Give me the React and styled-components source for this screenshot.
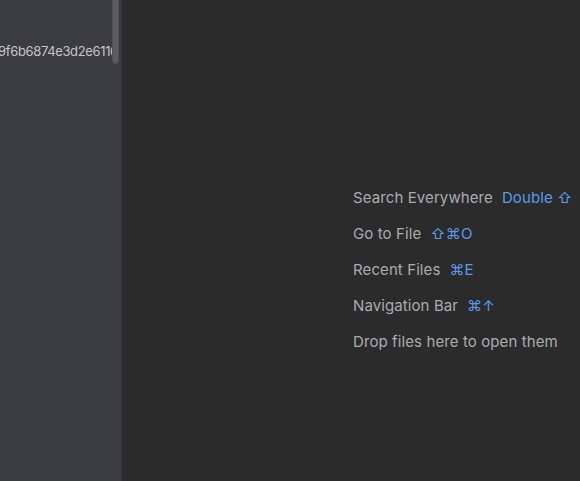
import React from 'react';
import styled, { createGlobalStyle } from 'styled-components';

const Global = createGlobalStyle`
  html, body { margin: 0; padding: 0; background: #2b2b2b; }
  body { font-family: Inter, "Noto Sans", sans-serif; -webkit-font-smoothing: antialiased; }
`;

const Frame = styled.div`
  display: flex;
  height: 481px;
  overflow: hidden;
`;

const Sidebar = styled.aside`
  position: relative;
  width: 121px;
  flex-shrink: 0;
  background: #3b3c3f;
  border-right: 1px solid #323335;
  overflow: hidden;
`;

const TreeRow = styled.div`
  height: 22px;
  padding-top: 40px;
  margin-left: -2px;
  white-space: nowrap;
  font-size: 13px;
  letter-spacing: -0.35px;
  line-height: 22px;
  color: #c4c5c8;
`;

const Thumb = styled.div`
  position: absolute;
  top: -6px;
  right: 2px;
  width: 7px;
  height: 70px;
  border-radius: 4px;
  background: #5b5c5f;
  border: 1px solid #505154;
  box-sizing: border-box;
`;

const Editor = styled.main`
  flex: 1;
  background: #2b2b2b;
  padding: 179px 0 0 231px;
`;

const Hints = styled.div`
  display: flex;
  flex-direction: column;
`;

const Hint = styled.div`
  display: flex;
  align-items: center;
  gap: 9px;
  height: 36px;
  white-space: nowrap;
  font-size: 15px;
  letter-spacing: 0.1px;
  color: #a9abaf;
`;

const Keys = styled.span`
  color: #5a9ae8;
`;

const hints = [
  ['Search Everywhere', 'Double ⇧'],
  ['Go to File', '⇧⌘O'],
  ['Recent Files', '⌘E'],
  ['Navigation Bar', '⌘↑'],
  ['Drop files here to open them', null],
];

export default function App() {
  return (
    <Frame>
      <Global />
      <Sidebar>
        <TreeRow>9f6b6874e3d2e6116</TreeRow>
        <Thumb />
      </Sidebar>
      <Editor>
        <Hints>
          {hints.map(([label, keys]) => (
            <Hint key={label}>
              {label}
              {keys && <Keys>{keys}</Keys>}
            </Hint>
          ))}
        </Hints>
      </Editor>
    </Frame>
  );
}
